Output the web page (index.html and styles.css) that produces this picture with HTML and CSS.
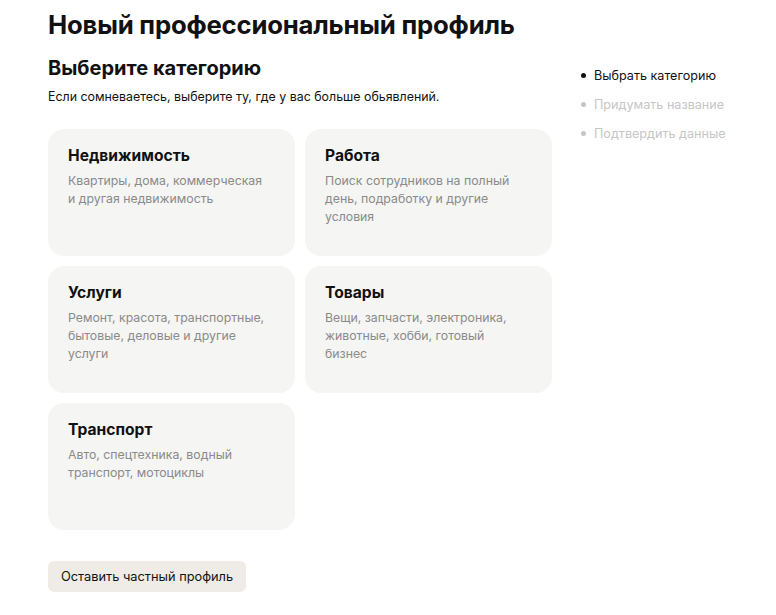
FILE: index.html
```html
<!DOCTYPE html>
<html lang="ru">
<head>
<meta charset="utf-8">
<title>Новый профессиональный профиль</title>
<link rel="stylesheet" href="styles.css">
</head>
<body>
<div class="page">
  <h1 class="title">Новый профессиональный профиль</h1>
  <div class="layout">
    <main class="main">
      <h2 class="subtitle">Выберите категорию</h2>
      <p class="hint">Если сомневаетесь, выберите ту, где у вас больше обьявлений.</p>
      <div class="grid">
        <div class="card">
          <div class="card-title">Недвижимость</div>
          <div class="card-text">Квартиры, дома, коммерческая и&nbsp;другая недвижимость</div>
        </div>
        <div class="card">
          <div class="card-title">Работа</div>
          <div class="card-text">Поиск сотрудников на полный день, подработку и другие условия</div>
        </div>
        <div class="card">
          <div class="card-title">Услуги</div>
          <div class="card-text">Ремонт, красота, транспортные, бытовые, деловые и другие услуги</div>
        </div>
        <div class="card">
          <div class="card-title">Товары</div>
          <div class="card-text">Вещи, запчасти, электроника, животные, хобби, готовый бизнес</div>
        </div>
        <div class="card">
          <div class="card-title">Транспорт</div>
          <div class="card-text">Авто, спецтехника, водный транспорт, мотоциклы</div>
        </div>
      </div>
      <button class="btn">Оставить частный профиль</button>
    </main>
    <aside class="steps">
      <ul class="step-list">
        <li class="step step-active">Выбрать категорию</li>
        <li class="step">Придумать название</li>
        <li class="step">Подтвердить данные</li>
      </ul>
    </aside>
  </div>
</div>
</body>
</html>
```
FILE: styles.css
```css
* { box-sizing: border-box; }
html, body { margin: 0; padding: 0; background: #fff; }
body {
  font-family: Inter, "Noto Sans", "Liberation Sans", sans-serif;
  color: #111;
}
.page { padding: 8px 0 0 48px; }
.title {
  margin: 0;
  font-size: 25.7px;
  line-height: 34px;
  font-weight: 700;
  letter-spacing: -0.2px;
}
.layout { display: flex; gap: 29px; margin-top: 13px; }
.main { width: 504px; }
.subtitle {
  margin: 0;
  font-size: 20px;
  line-height: 26px;
  font-weight: 700;
}
.hint {
  margin: 8px 0 0;
  font-size: 12.4px;
  line-height: 16px;
}
.grid {
  display: grid;
  grid-template-columns: 247px 247px;
  grid-auto-rows: 127px;
  gap: 10px;
  margin-top: 24px;
}
.card {
  background: #f5f5f4;
  border-radius: 16px;
  padding: 16px 20px;
}
.card-title {
  font-size: 15.6px;
  line-height: 22px;
  font-weight: 700;
}
.card-text {
  max-width: 199px;
  margin-top: 5px;
  font-size: 12.3px;
  line-height: 18px;
  color: #8a8a8a;
}
.btn {
  margin-top: 31px;
  display: block;
  height: 31px;
  padding: 0 13px;
  border: 0;
  border-radius: 6px;
  background: #efece7;
  font-family: inherit;
  font-size: 12.8px;
  color: #111;
}
.steps { padding-top: 6px; }
.step-list { list-style: none; margin: 0; padding: 0; }
.step {
  position: relative;
  padding-left: 13px;
  font-size: 12.6px;
  line-height: 29px;
  color: #c6c6c6;
}
.step::before {
  content: "";
  position: absolute;
  left: 0;
  top: 12px;
  width: 5px;
  height: 5px;
  border-radius: 50%;
  background: #c6c6c6;
}
.step-active { color: #111; }
.step-active::before { background: #111; }
```
